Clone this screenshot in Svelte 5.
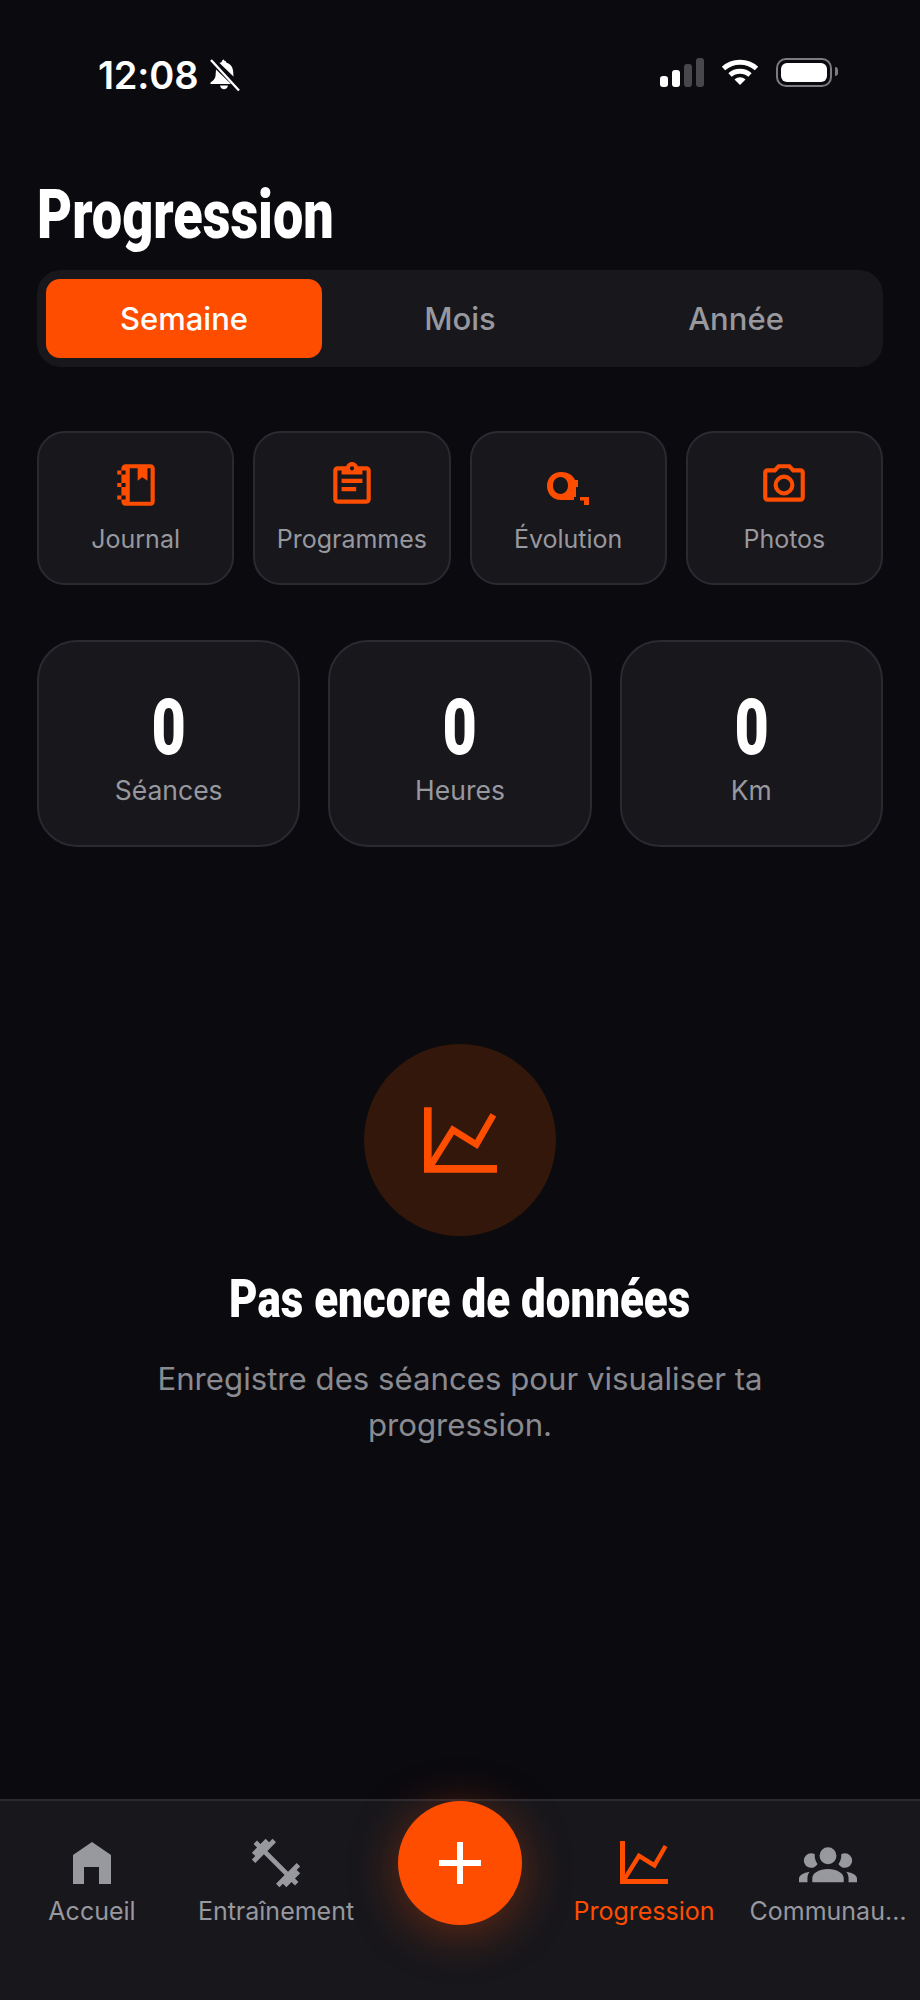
<script>
  const actions = [
    { label: 'Journal', kind: 'notebook' },
    { label: 'Programmes', kind: 'clipboard' },
    { label: 'Évolution', kind: 'tape' },
    { label: 'Photos', kind: 'camera' }
  ];
  const stats = [
    { value: '0', label: 'Séances' },
    { value: '0', label: 'Heures' },
    { value: '0', label: 'Km' }
  ];
</script>

{#snippet chart(cls)}
  <svg class={cls} viewBox="0 0 220 197" fill="none" stroke="currentColor">
    <path d="M11.500 0V185.500H220" stroke-width="23" />
    <path d="M22 172L87 68L158 112L209 23" stroke-width="20" />
  </svg>
{/snippet}

<div class="screen">
  <header class="status">
    <div class="clock">
      <span class="time">12:08</span>
      <svg class="bell" viewBox="0 0 31 33" fill="#fff">
        <path d="M15 1.500c1.500 0 2.300 1 2.500 2.300c4.200 1.200 6.500 4.700 6.700 9l.3 4.700l-14-13.500c.8-.6 1.500-.9 2.200-1.100c.1-1.400 1-2.400 2.300-2.400zM7 10.500L22 25H1.500v-1.500c3-2 4.700-3.800 5-6.500z" />
        <path d="M11 26.500h8c-.3 2.200-2 3.800-4 3.800s-3.700-1.600-4-3.800z" />
        <path d="M2 1L30 31.500" stroke="#fff" stroke-width="2.400" />
        <path d="M4.500 0L31 28.800" stroke="#0a0a0f" stroke-width="1.800" />
      </svg>
    </div>
    <div class="indicators">
      <div class="signal">
        <i class="on s1"></i><i class="on s2"></i><i class="s3"></i><i class="s4"></i>
      </div>
      <svg class="wifi" viewBox="0 0 38 28" fill="none" stroke="#fff" stroke-width="5">
        <path d="M2.500 10.500C11.500 2 26.500 2 35.500 10.500" />
        <path d="M9 17C14.500 12 23.500 12 29 17" />
        <path d="M13.500 21.500L19 27L24.500 21.500C21 18.500 17 18.500 13.500 21.500Z" fill="#fff" stroke="none" />
      </svg>
      <div class="battery"><div class="charge"></div><span class="nub"></span></div>
    </div>
  </header>

  <main class="content">
    <h1 class="title"><span>Progression</span></h1>

    <div class="segments">
      <button class="segment active">Semaine</button>
      <button class="segment">Mois</button>
      <button class="segment">Année</button>
    </div>

    <div class="actions">
      {#each actions as a}
        <div class="action">
          {#if a.kind === 'notebook'}
            <svg class="aicon" viewBox="0 0 24 24" fill="currentColor"><path fill-rule="evenodd" d="M3 7V5H5V4C5 2.900 5.900 2 7 2H19C20.100 2 21 2.900 21 4V20C21 21.100 20.100 22 19 22H7C5.900 22 5 21.100 5 20V19H3V17H5V13H3V11H5V7H3ZM9 4V20H19V4H17.500V10L15 8.300L12.800 10V4H9ZM5 5V7H7V5H5ZM5 11V13H7V11H5ZM5 17V19H7V17H5Z" /></svg>
          {:else if a.kind === 'clipboard'}
            <svg class="aicon" viewBox="0 0 24 24" fill="currentColor"><path fill-rule="evenodd" d="M19 3H14.820C14.400 1.840 13.300 1 12 1S9.600 1.840 9.180 3H5C3.900 3 3 3.900 3 5V19C3 20.100 3.900 21 5 21H19C20.100 21 21 20.100 21 19V5C21 3.900 20.100 3 19 3ZM12 3C12.550 3 13 3.450 13 4S12.550 5 12 5 11 4.550 11 4 11.450 3 12 3ZM5 5H7V7H17V5H19V19H5V5Z" /><path d="M7 9H17V11H7ZM7 13H14V15H7Z" /></svg>
          {:else if a.kind === 'tape'}
            <svg class="aicon" viewBox="0 0 50 50" fill="currentColor"><path fill-rule="evenodd" d="M18 12C25 12 30 15 32 20H35V27H33V37H31V40H18C10 40 4 34 4 26S10 12 18 12ZM17.500 17C13 17 10 21 10 25.500S13 34 17.500 34 25 30 25 25.500 22 17 17.500 17Z" /><path d="M37 37H46V45H41V40.500H37Z" /></svg>
          {:else}
            <svg class="aicon" viewBox="0 0 24 24" fill="currentColor"><path d="M20 4H16.830L15 2H9L7.170 4H4A2 2 0 0 0 2 6V18A2 2 0 0 0 4 20H20A2 2 0 0 0 22 18V6A2 2 0 0 0 20 4M20 18H4V6H8.050L9.880 4H14.120L15.950 6H20V18M12 7A5 5 0 0 0 7 12A5 5 0 0 0 12 17A5 5 0 0 0 17 12A5 5 0 0 0 12 7M12 15A3 3 0 0 1 9 12A3 3 0 0 1 12 9A3 3 0 0 1 15 12A3 3 0 0 1 12 15Z" /></svg>
          {/if}
          <span class="alabel">{a.label}</span>
        </div>
      {/each}
    </div>

    <div class="stats">
      {#each stats as s}
        <div class="stat">
          <span class="svalue">{s.value}</span>
          <span class="slabel">{s.label}</span>
        </div>
      {/each}
    </div>

    <section class="empty">
      <div class="disc">{@render chart('bigchart')}</div>
      <h2 class="etitle"><span>Pas encore de données</span></h2>
      <p class="etext">Enregistre des séances pour visualiser ta progression.</p>
    </section>
  </main>

  <nav class="tabbar">
    <div class="tab">
      <svg class="ticon" viewBox="0 0 58 58" fill="currentColor"><path d="M29 8L48 21V50H36V33H21V50H10V21Z" /></svg>
      <span>Accueil</span>
    </div>
    <div class="tab">
      <svg class="ticon" viewBox="0 0 24 24" fill="currentColor"><path d="M20.570 14.860L22 13.430 20.570 12 17 15.570 8.430 7 12 3.430 10.570 2 9.140 3.430 7.710 2 5.570 4.140 4.140 2.710 2.710 4.140l1.430 1.430L2 7.710l1.430 1.430L2 10.570 3.430 12 7 8.430 15.570 17 12 20.570 13.430 22l1.430-1.430L16.290 22l2.140-2.140 1.430 1.430 1.430-1.430-1.430-1.430L22 16.290z" /></svg>
      <span>Entraînement</span>
    </div>
    <div class="tab fabslot">
      <div class="fab">
        <svg viewBox="0 0 42 42" fill="none" stroke="#fff" stroke-width="6"><path d="M21 0V42M0 21H42" /></svg>
      </div>
    </div>
    <div class="tab current">
      <div class="ticon chartwrap">{@render chart('smallchart')}</div>
      <span>Progression</span>
    </div>
    <div class="tab">
      <svg class="ticon" viewBox="0 0 24 24" fill="currentColor"><path d="M12 5.500A3.500 3.500 0 0 1 15.500 9A3.500 3.500 0 0 1 12 12.500A3.500 3.500 0 0 1 8.500 9A3.500 3.500 0 0 1 12 5.500M5 8C5.560 8 6.080 8.150 6.530 8.420C6.380 9.850 6.800 11.270 7.660 12.380C7.160 13.340 6.160 14 5 14A3 3 0 0 1 2 11A3 3 0 0 1 5 8M19 8A3 3 0 0 1 22 11A3 3 0 0 1 19 14C17.840 14 16.840 13.340 16.340 12.380C17.200 11.270 17.620 9.850 17.470 8.420C17.920 8.150 18.440 8 19 8M5.500 18.250C5.500 16.180 8.410 14.500 12 14.500C15.590 14.500 18.500 16.180 18.500 18.250V20H5.500V18.250M0 20V18.500C0 17.110 1.890 15.940 4.450 15.600C3.860 16.280 3.500 17.220 3.500 18.250V20H0M24 20V18.500C24 17.110 22.110 15.940 19.550 15.600C20.140 16.280 20.500 17.220 20.500 18.250V20H24Z" /></svg>
      <span>Communau…</span>
    </div>
  </nav>
</div>

<style>
  :global(body) { margin: 0; background: #0a0a0f; }
  .screen {
    width: 920px; height: 2000px; background: #0a0a0f; display: flex; flex-direction: column;
    font-family: Inter, "Noto Sans", sans-serif; color: #98989f; overflow: hidden;
  }
  .status { height: 150px; padding: 56px 83px 0 98px; box-sizing: border-box; display: flex; justify-content: space-between; align-items: flex-start; }
  .clock { display: flex; align-items: center; gap: 11px; height: 38px; }
  .time { font: 600 38px/38px Inter, sans-serif; color: #fff; letter-spacing: -0.2px; }
  .bell { width: 31px; height: 33px; }
  .indicators { display: flex; align-items: center; gap: 17px; height: 38px; margin-top: -3px; }
  .signal { display: flex; align-items: flex-end; gap: 4px; height: 29px; }
  .signal i { width: 8px; border-radius: 3px; background: #48484c; display: block; }
  .signal .on { background: #fff; }
  .s1 { height: 11px; } .s2 { height: 17px; } .s3 { height: 23px; } .s4 { height: 29px; }
  .wifi { width: 38px; height: 28px; }
  .battery { width: 56px; height: 29px; border: 2.500px solid #7c7c80; border-radius: 10px; box-sizing: border-box; padding: 3px; position: relative; margin-right: 5px; }
  .charge { background: #fff; height: 100%; border-radius: 6px; }
  .nub { position: absolute; right: -8px; top: 7px; width: 3px; height: 9px; background: #7c7c80; border-radius: 0 3px 3px 0; }

  .content { flex: 1; padding: 0 37px; display: flex; flex-direction: column; }
  .title { margin: 27px 0 0; height: 93px; font: 900 68px/76px "Roboto", sans-serif; color: #fff; }
  .title span { display: inline-block; transform: scaleX(0.795); transform-origin: left center; }

  .segments { height: 97px; box-sizing: border-box; padding: 9px; background: #17171c; border-radius: 24px; display: flex; }
  .segment { flex: 1; border: 0; background: none; color: #98989f; font: 500 31px/1 Inter, sans-serif; border-radius: 14px; padding: 0; }
  .segment.active { background: #ff4d00; color: #fff; }

  .actions { margin-top: 64px; display: grid; grid-template-columns: repeat(4, 1fr); gap: 19px; }
  .action { height: 154px; box-sizing: border-box; background: #17171c; border: 2px solid #2a2a31; border-radius: 28px; display: flex; flex-direction: column; align-items: center; padding-top: 27px; }
  .aicon { width: 50px; height: 50px; color: #ff4d00; display: block; }
  .alabel { margin-top: 12px; font-size: 25px; line-height: 34px; }

  .stats { margin-top: 55px; display: grid; grid-template-columns: repeat(3, 1fr); gap: 28px; }
  .stat { height: 207px; box-sizing: border-box; background: #17171c; border: 2px solid #2a2a31; border-radius: 40px; display: flex; flex-direction: column; align-items: center; padding-top: 46px; }
  .svalue { font: 900 78px/80px Roboto, sans-serif; color: #fff; transform: scaleX(0.76); }
  .slabel { margin-top: 2px; font-size: 26.500px; line-height: 40px; }

  .empty { margin-top: 197px; display: flex; flex-direction: column; align-items: center; }
  .disc { width: 192px; height: 192px; border-radius: 50%; background: #33170b; display: flex; align-items: center; justify-content: center; color: #ff4d00; }
  .bigchart { width: 73px; height: 66px; display: block; }
  .etitle { margin: 31px 0 0; font: 900 54px/64px Roboto, sans-serif; color: #fff; text-align: center; white-space: nowrap; }
  .etitle span { display: inline-block; transform: scaleX(0.813); transform-origin: center; }
  .etext { margin: 25px 0 0; width: 640px; text-align: center; font-size: 31.200px; line-height: 46px; color: #8a8a91; }

  .tabbar { height: 201px; box-sizing: border-box; background: #17171c; border-top: 2px solid #2a2a31; display: grid; grid-template-columns: repeat(5, 1fr); flex: none; }
  .tab { display: flex; flex-direction: column; align-items: center; font-size: 25px; line-height: 34px; padding-top: 33px; min-width: 0; }
  .tab span { white-space: nowrap; margin-top: 2px; }
  .ticon { width: 58px; height: 58px; display: block; color: #98989f; }
  .current, .current .ticon { color: #ff4d00; }
  .chartwrap { display: flex; justify-content: center; padding-top: 7px; box-sizing: border-box; }
  .smallchart { width: 48px; height: 43px; display: block; }
  .fabslot { padding-top: 0; }
  .fab { width: 124px; height: 124px; border-radius: 50%; background: #ff4d00; box-shadow: 0 8px 50px rgba(255, 77, 0, 0.35); display: flex; align-items: center; justify-content: center; }
  .fab svg { width: 42px; height: 42px; }
</style>
